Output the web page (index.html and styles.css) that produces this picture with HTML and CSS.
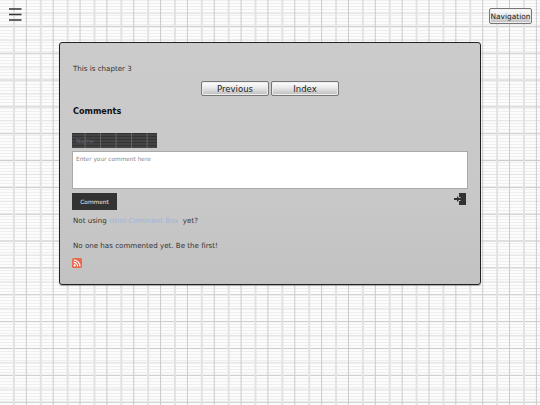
FILE: index.html
```html
<!DOCTYPE html>
<html lang="en">
<head>
<meta charset="utf-8">
<title>Chapter 3</title>
<link rel="stylesheet" href="styles.css">
</head>
<body>
<header class="top">
  <svg class="burger" width="13" height="13" viewBox="0 0 13 13" aria-hidden="true"><path d="M0 1h12.5M0 6.5h12.5M0 12h12.5" stroke="#333" stroke-width="1.5" fill="none"/></svg>
  <button class="btn nav-btn">Navigation</button>
</header>
<main class="panel">
  <p class="chapter">This is chapter 3</p>
  <div class="pager">
    <button class="btn page-btn">Previous</button>
    <button class="btn page-btn">Index</button>
  </div>
  <h2 class="heading">Comments</h2>
  <div class="name-box"><span>Name</span></div>
  <div class="comment-box">Enter your comment here</div>
  <div class="actions">
    <button class="submit">Comment</button>
    <svg class="login" width="12" height="12" viewBox="0 0 12 12" aria-hidden="true"><path d="M5 0h7v12H5V8h1.5V7H5V5h1.5V4H5z" fill="#333"/><path d="M0 5h3V3l3 3-3 3V7H0z" fill="#333"/></svg>
  </div>
  <p class="promo">Not using <a href="#">Html Comment Box</a> yet?</p>
  <p class="empty">No one has commented yet. Be the first!</p>
  <svg class="rss" width="10" height="10" viewBox="0 0 10 10" aria-hidden="true"><rect width="10" height="10" rx="1.5" fill="#e8694f"/><circle cx="2.6" cy="7.4" r="1.1" fill="#fff"/><path d="M1.6 4.4a4 4 0 0 1 4 4M1.6 2a6.4 6.4 0 0 1 6.4 6.4" stroke="#fff" stroke-width="1.1" fill="none"/></svg>
</main>
</body>
</html>
```
FILE: styles.css
```css
* { box-sizing: border-box; }
html, body { height: 100%; }
body {
  margin: 0;
  height: 405px;
  overflow: hidden;
  font-family: "DejaVu Sans", sans-serif;
  color: #333;
  background-color: #fdfdfd;
  background-image:
    linear-gradient(90deg, transparent 13px, #e2e2e2 13px, #e2e2e2 14.8px, transparent 14.8px, transparent 26px, #cacaca 26px, #cacaca 27px, transparent 27px),
    linear-gradient(180deg, transparent 12.6px, #e4e4e4 12.6px, #e4e4e4 14px, transparent 14px, transparent 26px, #cacaca 26px, #cacaca 27px, transparent 27px),
    repeating-linear-gradient(180deg, #efefef 0, #efefef 1px, #fcfcfc 1px, #fcfcfc 3px);
  background-size: 26.85px 100%, 100% 26.85px, 100% 100%;
}
.top {
  height: 42px;
  padding: 8px 8px 0 9px;
  display: flex;
  justify-content: space-between;
  align-items: flex-start;
}
.btn {
  font-family: "DejaVu Sans", sans-serif;
  color: #222;
  border: 1px solid #777;
  border-radius: 2px;
  background: linear-gradient(180deg, #fff 0%, #e8e8e8 45%, #bdbdbd 100%);
  box-shadow: inset 0 0 0 1px #eee;
  padding: 0;
}
.nav-btn { width: 43px; height: 16px; font-size: 7.4px; }
.panel {
  margin-left: 59px;
  width: 422px;
  height: 243px;
  padding: 21px 12px 0 13px;
  border: 1px solid #222;
  border-radius: 3px;
  background: linear-gradient(180deg, #cbcbcb 0%, #c8c8c8 65%, #c2c2c2 100%);
  box-shadow: 0 1px 1px rgba(0,0,0,.3);
}
.chapter { margin: 0; font-size: 7.1px; line-height: 10px; }
.pager {
  margin: 7px 0 0 -1px;
  display: flex;
  justify-content: center;
  gap: 2px;
}
.page-btn { width: 68px; height: 15px; font-size: 8.5px; }
.heading { margin: 9px 0 0; font-size: 8.1px; line-height: 12px; font-weight: 700; color: #111; }
.name-box {
  margin: 16px 0 0 -1px;
  width: 85px;
  height: 15px;
  padding: 0 4px;
  font-size: 6px;
  line-height: 15px;
  color: #666;
  background-color: #3a3a3a;
  background-image:
    linear-gradient(90deg, transparent 13px, #666 13px, #666 14px, transparent 14px),
    repeating-linear-gradient(180deg, #333 0, #333 1px, #444 1px, #444 3px);
  background-size: 15.5px 100%, 100% 100%;
}
.comment-box {
  margin: 3px 0 0 -1px;
  width: 396px;
  height: 38px;
  padding: 3px 3px;
  font-size: 5.8px;
  line-height: 9px;
  color: #888;
  background: #fff;
  border: 1px solid #aaa;
}
.actions {
  margin: 4px 0 0 -1px;
  display: flex;
  justify-content: space-between;
  align-items: flex-start;
}
.submit {
  width: 45px;
  height: 17px;
  padding: 0;
  border: 0;
  background: #333;
  color: #eee;
  font-family: inherit;
  font-size: 5.8px;
}
.login { margin-right: 2px; }
.promo { margin: 6px 0 0; font-size: 7.1px; line-height: 10px; }
.promo a { color: #9db4dc; text-decoration: none; margin-right: 2px; }
.empty { margin: 15px 0 0; font-size: 7.1px; line-height: 10px; }
.rss { display: block; margin: 7px 0 0 -1px; }
```
